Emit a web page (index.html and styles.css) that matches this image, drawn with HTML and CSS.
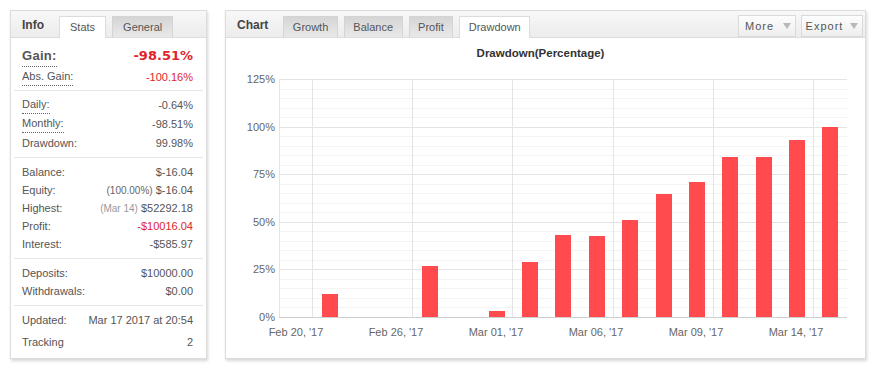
FILE: index.html
```html
<!DOCTYPE html>
<html lang="en">
<head>
    <meta charset="UTF-8">
    <title>Account Drawdown</title>
    <link rel="stylesheet" href="styles.css">
</head>
<body>
    <div class="page">
        <div class="panel info">
            <div class="panel-head">
                <span class="panel-title">Info</span>
                <span class="tab active">Stats</span>
                <span class="tab">General</span>
            </div>

            <div class="section first">
                <div class="row big tip"><span class="label">Gain:</span><span class="value red">-98.51%</span></div>
                <div class="row tip"><span class="label">Abs. Gain:</span><span class="red">-100.16%</span></div>
            </div>
            <div class="section">
                <div class="row tip"><span class="label">Daily:</span><span>-0.64%</span></div>
                <div class="row tip"><span class="label">Monthly:</span><span>-98.51%</span></div>
                <div class="row"><span>Drawdown:</span><span>99.98%</span></div>
            </div>
            <div class="section">
                <div class="row"><span>Balance:</span><span>$-16.04</span></div>
                <div class="row"><span>Equity:</span><span><small class="note">(100.00%)</small> $-16.04</span></div>
                <div class="row"><span>Highest:</span><span><small class="note light">(Mar 14)</small> $52292.18</span></div>
                <div class="row"><span>Profit:</span><span class="red">-$10016.04</span></div>
                <div class="row"><span>Interest:</span><span>-$585.97</span></div>
            </div>
            <div class="section">
                <div class="row"><span>Deposits:</span><span>$10000.00</span></div>
                <div class="row"><span>Withdrawals:</span><span>$0.00</span></div>
            </div>
            <div class="section last">
                <div class="row tall"><span>Updated:</span><span>Mar 17 2017 at 20:54</span></div>
                <div class="row tall"><span>Tracking</span><span>2</span></div>
            </div>
        </div>

        <div class="panel chart">
            <div class="panel-head">
                <span class="panel-title">Chart</span>
                <span class="tab">Growth</span>
                <span class="tab">Balance</span>
                <span class="tab">Profit</span>
                <span class="tab active">Drawdown</span>
                <div class="tools">
                    <span class="btn more"><span class="btn-label">More</span><i class="arrow"></i></span>
                    <span class="btn export"><span class="btn-label">Export</span><i class="arrow"></i></span>
                </div>
            </div>

            <div class="chart-title">Drawdown(Percentage)</div>

            <svg class="plot" width="639" height="296" viewBox="0 0 639 296">
                <!-- minor grid -->
                <g class="minor">
                    <line x1="54" x2="621" y1="247.5" y2="247.5"/>
                    <line x1="54" x2="621" y1="238.5" y2="238.5"/>
                    <line x1="54" x2="621" y1="228.5" y2="228.5"/>
                    <line x1="54" x2="621" y1="219.5" y2="219.5"/>
                    <line x1="54" x2="621" y1="200.5" y2="200.5"/>
                    <line x1="54" x2="621" y1="190.5" y2="190.5"/>
                    <line x1="54" x2="621" y1="181.5" y2="181.5"/>
                    <line x1="54" x2="621" y1="171.5" y2="171.5"/>
                    <line x1="54" x2="621" y1="152.5" y2="152.5"/>
                    <line x1="54" x2="621" y1="143.5" y2="143.5"/>
                    <line x1="54" x2="621" y1="133.5" y2="133.5"/>
                    <line x1="54" x2="621" y1="124.5" y2="124.5"/>
                    <line x1="54" x2="621" y1="105.5" y2="105.5"/>
                    <line x1="54" x2="621" y1="95.5" y2="95.5"/>
                    <line x1="54" x2="621" y1="86.5" y2="86.5"/>
                    <line x1="54" x2="621" y1="76.5" y2="76.5"/>
                    <line x1="54" x2="621" y1="57.5" y2="57.5"/>
                    <line x1="54" x2="621" y1="48.5" y2="48.5"/>
                    <line x1="54" x2="621" y1="38.5" y2="38.5"/>
                    <line x1="54" x2="621" y1="29.5" y2="29.5"/>
                </g>
                <!-- major grid -->
                <g class="major">
                    <line x1="53" x2="621" y1="209.5" y2="209.5"/>
                    <line x1="53" x2="621" y1="162.5" y2="162.5"/>
                    <line x1="53" x2="621" y1="114.5" y2="114.5"/>
                    <line x1="53" x2="621" y1="67.5" y2="67.5"/>
                    <line x1="53" x2="621" y1="19.5" y2="19.5"/>
                    <line x1="53.5" x2="53.5" y1="19" y2="257"/>
                    <line x1="86.5" x2="86.5" y1="19" y2="257"/>
                    <line x1="186.5" x2="186.5" y1="19" y2="257"/>
                    <line x1="286.5" x2="286.5" y1="19" y2="257"/>
                    <line x1="387.5" x2="387.5" y1="19" y2="257"/>
                    <line x1="487.5" x2="487.5" y1="19" y2="257"/>
                    <line x1="587.5" x2="587.5" y1="19" y2="257"/>
                </g>
                <line class="axis" x1="53" x2="621" y1="257.5" y2="257.5"/>

                <g class="bars">
                    <rect x="96" y="234" width="16" height="23"/>
                    <rect x="196" y="206" width="16" height="51"/>
                    <rect x="263" y="251" width="16" height="6"/>
                    <rect x="296" y="202" width="16" height="55"/>
                    <rect x="329" y="175" width="16" height="82"/>
                    <rect x="363" y="176" width="16" height="81"/>
                    <rect x="396" y="160" width="16" height="97"/>
                    <rect x="430" y="134" width="16" height="123"/>
                    <rect x="463" y="122" width="16" height="135"/>
                    <rect x="496" y="97" width="16" height="160"/>
                    <rect x="530" y="97" width="16" height="160"/>
                    <rect x="563" y="80" width="16" height="177"/>
                    <rect x="596" y="67" width="16" height="190"/>
                </g>

                <g class="ylabels">
                    <text x="49" y="261">0%</text>
                    <text x="49" y="213">25%</text>
                    <text x="49" y="166">50%</text>
                    <text x="49" y="118">75%</text>
                    <text x="49" y="71">100%</text>
                    <text x="49" y="23">125%</text>
                </g>
                <g class="xlabels">
                    <text x="70" y="276">Feb 20, '17</text>
                    <text x="170" y="276">Feb 26, '17</text>
                    <text x="270" y="276">Mar 01, '17</text>
                    <text x="370" y="276">Mar 06, '17</text>
                    <text x="470" y="276">Mar 09, '17</text>
                    <text x="570" y="276">Mar 14, '17</text>
                </g>
            </svg>
        </div>
    </div>
</body>
</html>
```

FILE: styles.css
```css
* {
    box-sizing: border-box;
}

body {
    margin: 0;
    background-color: #fff;
    font-family: "Liberation Sans", Arial, sans-serif;
    font-size: 11px;
    color: #555;
}

.page {
    display: flex;
    align-items: flex-start;
    gap: 18px;
    padding: 10px;
}

.panel {
    background-color: #fff;
    border: 1px solid #dcdcdc;
    box-shadow: 1px 2px 3px rgba(0, 0, 0, 0.16);
}

.info {
    width: 197px;
}

.chart {
    width: 641px;
}

/* header with tabs */
.panel-head {
    display: flex;
    align-items: flex-end;
    height: 27px;
    padding: 0 2px 0 11px;
    background: linear-gradient(#f8f8f8, #ececec);
    border-bottom: 1px solid #dcdcdc;
}

.panel-title {
    align-self: center;
    margin: 2px 15px 0 0;
    font-size: 12px;
    font-weight: bold;
    color: #444;
}

.tab {
    height: 21px;
    line-height: 20px;
    padding: 0 8.5px;
    margin-right: 6px;
    border: 1px solid #d4d4d4;
    border-bottom: 0;
    background: linear-gradient(#d5d5d5, #e9e9e9);
    color: #555;
}

.info .tab {
    padding: 0 10px;
}

.tab.active {
    height: 22px;
    margin-bottom: -1px;
    border-color: #dcdcdc;
    background: #fff;
}

.tools {
    display: flex;
    gap: 5px;
    margin-left: auto;
}

.btn {
    display: flex;
    align-items: center;
    height: 22px;
    border: 1px solid #dadada;
    background: linear-gradient(#fdfdfd, #eeeeee);
    color: #555;
    letter-spacing: 1px;
}

.btn.more {
    width: 58px;
}

.btn.export {
    width: 62px;
}

.btn-label {
    flex: 1;
    text-align: center;
}

.arrow {
    width: 0;
    height: 0;
    margin: 0 4px 0 3px;
    border-top: 6px solid #b8b8b8;
    border-left: 4px solid transparent;
    border-right: 4px solid transparent;
}

/* info list */
.section {
    margin: 0 3px;
    padding: 5px 10px 5px 8px;
    border-bottom: 1px solid #e6e6e6;
}

.section.first {
    padding-top: 8px;
    padding-bottom: 3px;
}

.section.last {
    padding-top: 3px;
    border-bottom: 0;
}

.row {
    display: flex;
    justify-content: space-between;
    align-items: flex-start;
    height: 18px;
    line-height: 18px;
    white-space: nowrap;
}

.row.tip {
    height: 19px;
}

.row.tip .label {
    line-height: 17px;
    border-bottom: 1px dotted #666;
}

.row.big {
    height: 22px;
}

.row.big .label {
    line-height: 20px;
    font-size: 13px;
    font-weight: bold;
    letter-spacing: 0.3px;
    color: #555;
}

.row.big .value {
    line-height: 20px;
    font-family: "DejaVu Sans", Verdana, sans-serif;
    font-size: 13px;
    font-weight: bold;
}

.row.tall {
    height: 22px;
    line-height: 22px;
}

.red {
    color: #e0242c;
}

.note {
    font-size: 10px;
    color: #666;
}

.note.light {
    color: #999;
}

/* chart */
.chart-title {
    padding-top: 8px;
    height: 22px;
    line-height: 14px;
    text-align: center;
    font-size: 11.5px;
    font-weight: bold;
    color: #333;
    padding-right: 10px;
}

.plot {
    display: block;
    margin-bottom: 2px;
    font-family: "Liberation Sans", Arial, sans-serif;
    font-size: 11px;
}

.plot line {
    shape-rendering: crispEdges;
    stroke-width: 1;
}

.minor line {
    stroke: #f4f4f4;
}

.major line {
    stroke: #e4e4e4;
}

.axis {
    stroke: #cfcfcf;
}

.bars rect {
    fill: #ff4a4e;
}

.ylabels text {
    fill: #666;
    text-anchor: end;
}

.xlabels text {
    fill: #666;
    text-anchor: middle;
}
```
